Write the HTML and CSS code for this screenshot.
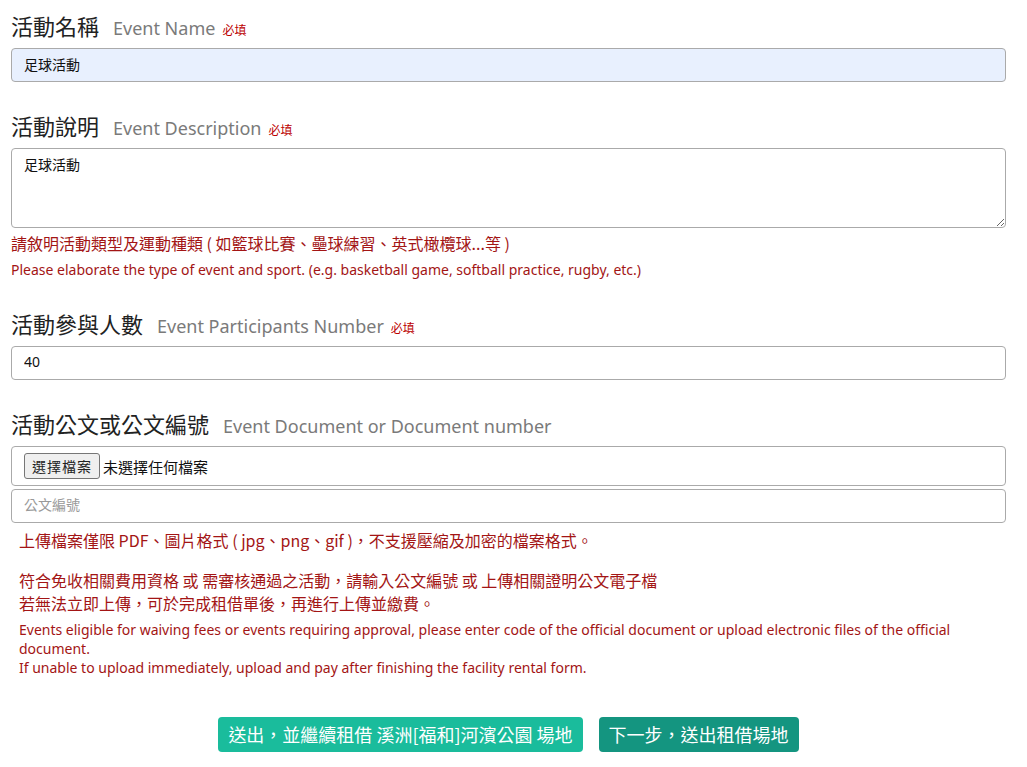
FILE: index.html
```html
<!DOCTYPE html>
<html lang="zh-Hant">
<head>
<meta charset="utf-8">
<title>活動資料</title>
<link rel="stylesheet" href="styles.css">
</head>
<body>
<form class="form">
  <div class="field">
    <div class="label"><span class="zh">活動名稱</span><span class="en">Event Name</span><span class="req">必填</span></div>
    <input class="control autofill" type="text" value="足球活動">
  </div>

  <div class="field">
    <div class="label"><span class="zh">活動說明</span><span class="en">Event Description</span><span class="req">必填</span></div>
    <textarea class="control area">足球活動</textarea>
    <p class="hint-zh">請敘明活動類型及運動種類 ( 如籃球比賽、壘球練習、英式橄欖球...等 )</p>
    <p class="hint-en">Please elaborate the type of event and sport. (e.g. basketball game, softball practice, rugby, etc.)</p>
  </div>

  <div class="field">
    <div class="label"><span class="zh">活動參與人數</span><span class="en">Event Participants Number</span><span class="req">必填</span></div>
    <input class="control" type="text" value="40">
  </div>

  <div class="field">
    <div class="label"><span class="zh">活動公文或公文編號</span><span class="en">Event Document or Document number</span></div>
    <div class="control file">
      <button type="button" class="file-btn">選擇檔案</button><span class="file-name">未選擇任何檔案</span>
    </div>
    <input class="control docno" type="text" placeholder="公文編號">
    <div class="notes">
      <p class="note-zh">上傳檔案僅限 PDF、圖片格式 ( jpg、png、gif )，不支援壓縮及加密的檔案格式。</p>
      <p class="note-zh gap">符合免收相關費用資格 或 需審核通過之活動，請輸入公文編號 或 上傳相關證明公文電子檔<br>若無法立即上傳，可於完成租借單後，再進行上傳並繳費。</p>
      <p class="note-en">Events eligible for waiving fees or events requiring approval, please enter code of the official document or upload electronic files of the official document.<br>If unable to upload immediately, upload and pay after finishing the facility rental form.</p>
    </div>
  </div>

  <div class="actions">
    <button type="button" class="btn btn-light">送出，並繼續租借 溪洲[福和]河濱公園 場地</button>
    <button type="button" class="btn btn-dark">下一步，送出租借場地</button>
  </div>
</form>
</body>
</html>
```

FILE: styles.css
```css
* { box-sizing: border-box; }
html, body { margin: 0; padding: 0; background: #fff; }
body {
  font-family: "Noto Sans", "Noto Sans CJK TC", sans-serif;
  color: #212529;
}
.form {
  padding: 10px 21px 0 11px;
  display: flex;
  flex-direction: column;
}
.field { display: flex; flex-direction: column; margin-bottom: 28px; }
.label {
  display: flex;
  align-items: baseline;
  height: 30px;
  margin-bottom: 8px;
  line-height: 30px;
}
.zh { font-family: "Noto Sans CJK TC", sans-serif; font-size: 22px; color: #222; }
.en { font-size: 18px; color: #7a7a7a; margin-left: 14px; }
.req { font-family: "Noto Sans CJK TC", sans-serif; font-size: 12px; color: #b00; margin-left: 7px; }

.control {
  width: 100%;
  height: 34px;
  border: 1px solid #aaa;
  border-radius: 4px;
  padding: 0 12px 3px;
  font-family: "Noto Sans", "Noto Sans CJK TC", sans-serif;
  font-size: 14px;
  color: #111;
  background: #fff;
  outline: none;
}
.autofill { background: #e8f0fe; }
.area { height: 80px; padding: 6px 12px; resize: vertical; display: block; line-height: 20px; }

.hint-zh {
  margin: 5px 0 0;
  font-family: "Noto Sans CJK TC", sans-serif;
  font-size: 16px;
  line-height: 20px;
  color: #a31515;
}
.hint-en {
  margin: 7px 0 0;
  font-size: 14px;
  line-height: 20px;
  color: #a31515;
}

.file {
  height: 40px;
  display: flex;
  align-items: center;
  padding: 0 12px;
}
.file-btn {
  font-family: "Noto Sans CJK TC", sans-serif;
  font-size: 14px;
  color: #222;
  background: #efefef;
  border: 1px solid #767676;
  border-radius: 3px;
  height: 26px;
  padding: 0 7px;
  letter-spacing: 1px;
  margin-right: 3px;
}
.file-name { font-family: "Noto Sans CJK TC", sans-serif; font-size: 15px; color: #111; }
.docno { margin-top: 3px; }
.docno::placeholder { color: #999; font-family: "Noto Sans CJK TC", sans-serif; }

.notes { padding: 6px 8px 0 8px; }
.notes p { margin: 0; color: #a31515; }
.note-zh { font-family: "Noto Sans CJK TC", sans-serif; font-size: 16px; line-height: 23px; }
.note-zh.gap { margin-top: 17px !important; }
.note-en { font-size: 14px; line-height: 19px; margin-top: 5px !important; }

.actions {
  display: flex;
  justify-content: center;
  gap: 16px;
  margin-top: 12px;
}
.btn {
  height: 35px;
  border: none;
  border-radius: 4px;
  padding: 0 10px 2px;
  color: #fff;
  font-family: "Noto Sans CJK TC", sans-serif;
  font-size: 18px;
}
.btn-light { background: #1abc9c; }
.btn-dark { background: #149580; }
```
